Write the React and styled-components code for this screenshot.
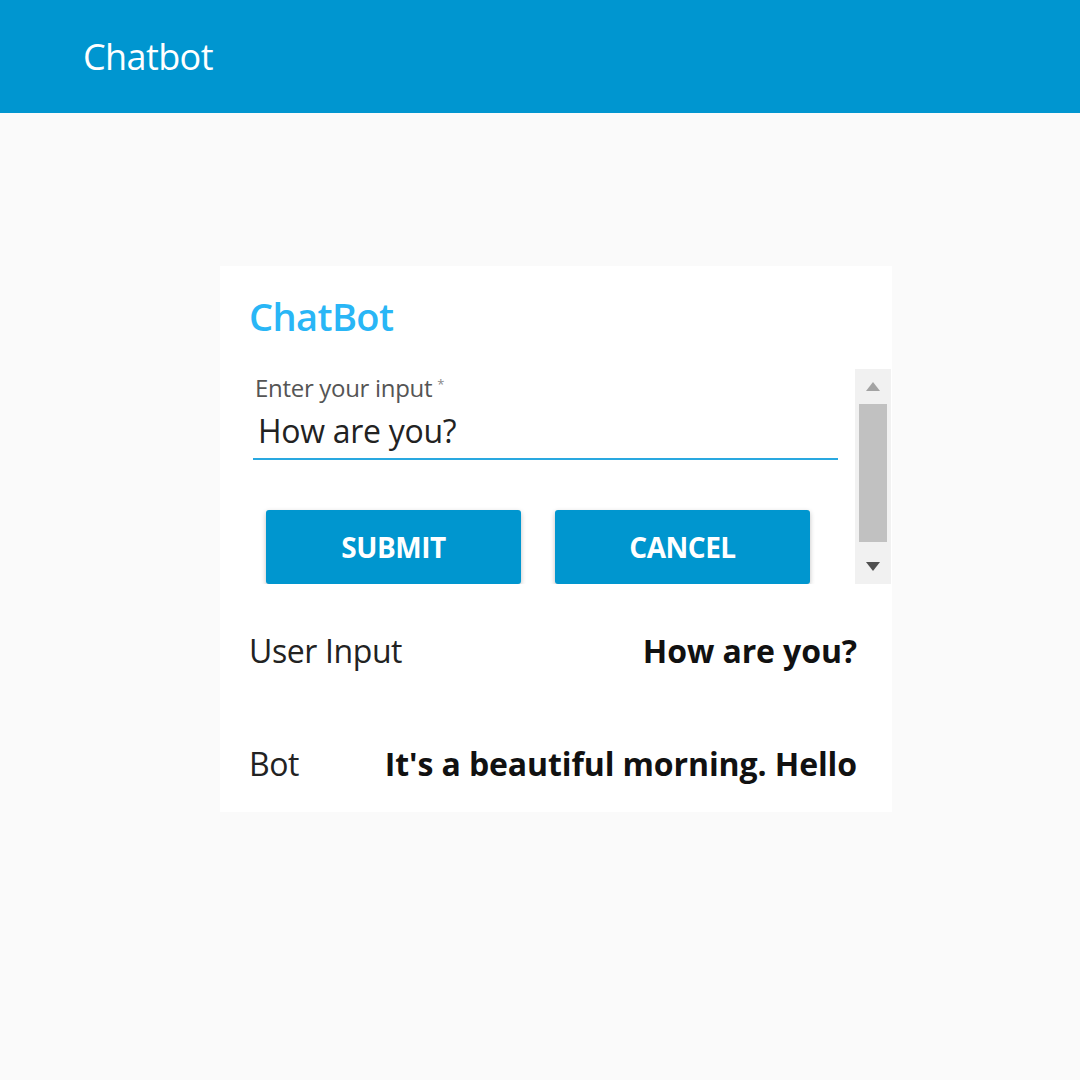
import React, { useState } from "react";
import styled, { createGlobalStyle } from "styled-components";

const GlobalStyle = createGlobalStyle`
  html, body {
    margin: 0;
    padding: 0;
    background: #fafafa;
    font-family: "Open Sans", "Noto Sans", sans-serif;
  }
`;

const Screen = styled.div`
  width: 1080px;
  min-height: 1080px;
  background: #fafafa;
`;

const AppBar = styled.header`
  height: 113px;
  background: #0096d0;
  display: flex;
  align-items: center;
  padding-left: 83px;
  box-sizing: border-box;
`;

const AppTitle = styled.h1`
  margin: 0;
  color: #ffffff;
  font-size: 36px;
  font-weight: 400;
  letter-spacing: -0.6px;
  line-height: 48px;
`;

const Main = styled.main`
  display: flex;
  padding: 153px 0 0 220px;
`;

const Card = styled.section`
  width: 672px;
  height: 546px;
  background: #ffffff;
  box-sizing: border-box;
  padding: 26px 1px 27px 29px;
  display: flex;
  flex-direction: column;
`;

const CardTitle = styled.h2`
  margin: 0;
  color: #29b6f6;
  font-size: 38px;
  font-weight: 600;
  letter-spacing: -0.6px;
  line-height: 48px;
`;

const ScrollArea = styled.div`
  margin-top: 29px;
  height: 215px;
  flex-shrink: 0;
  display: flex;
  overflow: hidden;
`;

const ScrollContent = styled.div`
  flex: 1;
  padding: 4px 17px 0 4px;
`;

const FieldLabel = styled.label`
  display: block;
  height: 30px;
  color: #555555;
  font-size: 24px;
  letter-spacing: -0.3px;
  line-height: 30px;
  padding-left: 2px;
`;

const Required = styled.span`
  position: relative;
  top: -8px;
  font-size: 13px;
  line-height: 0;
  color: #888;
  margin-left: 5px;
`;

const TextInput = styled.input`
  display: block;
  width: 100%;
  box-sizing: border-box;
  border: none;
  border-bottom: 2px solid #29a8e0;
  outline: none;
  background: transparent;
  font-family: inherit;
  font-size: 32px;
  letter-spacing: -0.3px;
  color: #222222;
  padding: 10px 0 11px 5px;
  line-height: 34px;
  height: 57px;
`;

const ButtonRow = styled.div`
  display: flex;
  gap: 34px;
  padding-left: 13px;
  margin-top: 50px;
`;

const ActionButton = styled.button`
  width: 255px;
  height: 74px;
  border: none;
  border-radius: 3px;
  background: #0096cf;
  color: #ffffff;
  font-family: inherit;
  font-size: 28px;
  font-weight: 700;
  letter-spacing: -0.5px;
  text-transform: uppercase;
  box-shadow: 0 2px 5px rgba(0, 0, 0, 0.25);
  cursor: pointer;
  padding: 0;
`;

const ScrollTrack = styled.div`
  width: 36px;
  height: 215px;
  background: #f1f1f1;
  display: flex;
  flex-direction: column;
  align-items: center;
  flex-shrink: 0;
`;

const ArrowBox = styled.div`
  height: 35px;
  width: 100%;
  display: flex;
  align-items: center;
  justify-content: center;
  margin-top: ${(p) => (p.$bottom ? "auto" : "0")};
`;

const Thumb = styled.div`
  width: 28px;
  height: 138px;
  background: #c1c1c1;
`;

const Rows = styled.div`
  margin-top: 44px;
  display: flex;
  flex-direction: column;
  gap: 69px;
`;

const Row = styled.div`
  display: flex;
  justify-content: space-between;
  align-items: center;
  height: 44px;
  padding-right: 34px;
  font-size: 32px;
  color: #222222;
`;

const RowLabel = styled.span`
  font-weight: 400;
  letter-spacing: -0.4px;
`;

const RowValue = styled.span`
  font-weight: 700;
  color: #111111;
  letter-spacing: -0.1px;
`;

function Arrow({ up, color }) {
  return (
    <svg width="14" height="9" viewBox="0 0 14 9">
      <polygon points={up ? "7,0 14,9 0,9" : "0,0 14,0 7,9"} fill={color} />
    </svg>
  );
}

export default function App() {
  const [value, setValue] = useState("How are you?");
  const [reply] = useState("It's a beautiful morning. Hello");

  return (
    <Screen>
      <GlobalStyle />
      <AppBar>
        <AppTitle>Chatbot</AppTitle>
      </AppBar>
      <Main>
        <Card>
          <CardTitle>ChatBot</CardTitle>
          <ScrollArea>
            <ScrollContent>
              <FieldLabel>
                Enter your input<Required>*</Required>
              </FieldLabel>
              <TextInput value={value} onChange={(e) => setValue(e.target.value)} />
              <ButtonRow>
                <ActionButton>Submit</ActionButton>
                <ActionButton>Cancel</ActionButton>
              </ButtonRow>
            </ScrollContent>
            <ScrollTrack>
              <ArrowBox>
                <Arrow up color="#a3a3a3" />
              </ArrowBox>
              <Thumb />
              <ArrowBox $bottom>
                <Arrow color="#505050" />
              </ArrowBox>
            </ScrollTrack>
          </ScrollArea>
          <Rows>
            <Row>
              <RowLabel>User Input</RowLabel>
              <RowValue>How are you?</RowValue>
            </Row>
            <Row>
              <RowLabel>Bot</RowLabel>
              <RowValue>{reply}</RowValue>
            </Row>
          </Rows>
        </Card>
      </Main>
    </Screen>
  );
}
